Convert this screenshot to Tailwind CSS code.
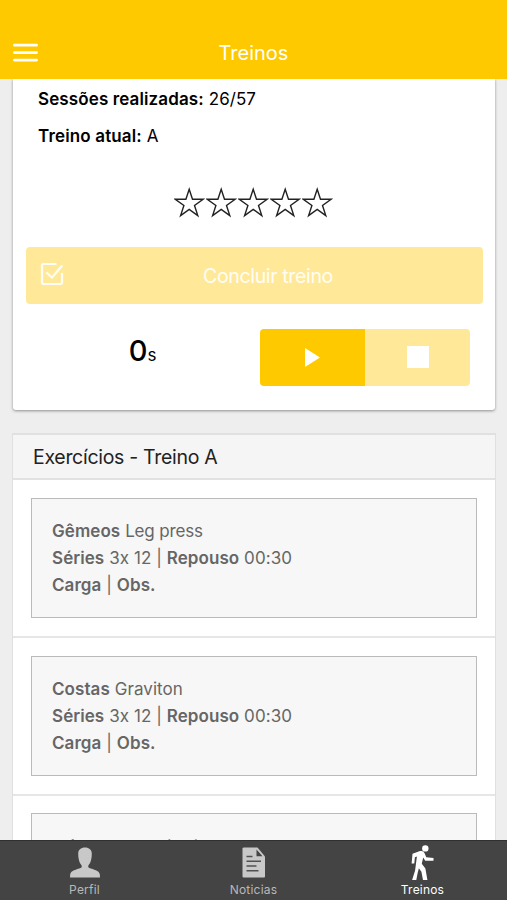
<!DOCTYPE html>
<html lang="pt">
<head>
<meta charset="utf-8">
<title>Treinos</title>
<script src="https://cdn.jsdelivr.net/npm/@tailwindcss/browser@4"></script>
</head>
<body class="bg-[#eeeeee]">
<div class="flex h-[900px] w-[507px] flex-col overflow-hidden bg-[#eeeeee] font-['Inter','Liberation_Sans',sans-serif] text-black">
  <header class="grid h-[79px] shrink-0 grid-cols-[1fr_auto_1fr] items-center bg-[#ffc900] px-[13px] pt-[26px] text-white">
    <svg class="h-5 w-[25px]" viewBox="0 0 25 20" stroke="currentColor" stroke-width="2.7" stroke-linecap="round"><path d="M1.4 2.2h22.2M1.4 9.6h22.2M1.4 17.1h22.2"/></svg>
    <h1 class="text-[20px] leading-6">Treinos</h1>
  </header>

  <main class="min-h-0 flex-1 overflow-hidden px-[13px]">
    <section class="h-[331px] w-[482px] rounded-b-[3px] bg-white px-[13px] shadow-[0_1px_3px_rgba(0,0,0,0.4)]">
      <div class="px-3 pt-[7px] text-[17px] leading-[26px] tracking-[0.07px]">
        <p><b class="font-semibold tracking-[0.12px]">Sessões realizadas:</b> 26/57</p>
        <p class="mt-[11px]"><b class="font-semibold tracking-[0.15px]">Treino atual:</b> A</p>
      </div>
      <div class="mt-[37px] -ml-px flex h-8 justify-center gap-[1.6px] text-[#222]">
        <svg class="h-8 w-[30.5px]" viewBox="0 0 30.5 32" fill="none" stroke="currentColor" stroke-width="1.4"><path d="M15.2 3.2l3.3 10.1h10.6l-8.6 6.2 3.3 10.1-8.6-6.2-8.6 6.2 3.3-10.1-8.6-6.2h10.6z"/></svg>
        <svg class="h-8 w-[30.5px]" viewBox="0 0 30.5 32" fill="none" stroke="currentColor" stroke-width="1.4"><path d="M15.2 3.2l3.3 10.1h10.6l-8.6 6.2 3.3 10.1-8.6-6.2-8.6 6.2 3.3-10.1-8.6-6.2h10.6z"/></svg>
        <svg class="h-8 w-[30.5px]" viewBox="0 0 30.5 32" fill="none" stroke="currentColor" stroke-width="1.4"><path d="M15.2 3.2l3.3 10.1h10.6l-8.6 6.2 3.3 10.1-8.6-6.2-8.6 6.2 3.3-10.1-8.6-6.2h10.6z"/></svg>
        <svg class="h-8 w-[30.5px]" viewBox="0 0 30.5 32" fill="none" stroke="currentColor" stroke-width="1.4"><path d="M15.2 3.2l3.3 10.1h10.6l-8.6 6.2 3.3 10.1-8.6-6.2-8.6 6.2 3.3-10.1-8.6-6.2h10.6z"/></svg>
        <svg class="h-8 w-[30.5px]" viewBox="0 0 30.5 32" fill="none" stroke="currentColor" stroke-width="1.4"><path d="M15.2 3.2l3.3 10.1h10.6l-8.6 6.2 3.3 10.1-8.6-6.2-8.6 6.2 3.3-10.1-8.6-6.2h10.6z"/></svg>
      </div>
      <button class="mt-[29px] grid h-[57px] w-[457px] grid-cols-[40px_1fr_13px] items-center rounded-[4px] bg-[#ffe999] px-[14px] text-white/90">
        <svg class="mb-[3px] h-6 w-6" viewBox="0 0 24 24" fill="none" stroke="currentColor" stroke-width="2.2"><path d="M16.5 2H3.3Q2 2 2 3.300V20.700Q2 22 3.300 22H20.700Q22 22 22 20.700V11M6.300 10.500L12 15.500L22.300 3.500"/></svg>
        <span class="pt-0.5 text-center text-[19.500px] tracking-[-0.35px]">Concluir treino</span>
      </button>
      <div class="mt-[25px] flex h-[57px] justify-between pr-3">
        <p class="w-[233px] pt-[5px] text-center"><span class="text-[29px] leading-[34px] font-medium">0</span><span class="text-[17px]">s</span></p>
        <div class="flex w-[210px] overflow-hidden rounded-[4px]">
          <button class="flex flex-1 items-center justify-center bg-[#ffc900]"><svg class="mb-px h-[19px] w-[15px]" viewBox="0 0 15 19" fill="#fff"><path d="M0 0l15 9.500L0 19z"/></svg></button>
          <button class="flex flex-1 items-center justify-center bg-[#ffe999]"><span class="mb-0.5 h-[22px] w-[22px] bg-white"></span></button>
        </div>
      </div>
    </section>

    <section class="-ml-px mt-[23px] w-[484px] border-x border-t-2 border-[#e0e0e0] bg-white">
      <h2 class="h-[45px] border-b-2 border-[#e2e2e2] bg-[#f5f5f5] px-5 text-[19.500px] leading-[45px] tracking-[-0.3px] text-[#222]">Exercícios - Treino A</h2>
      <article class="h-[158px] border-b-2 border-[#e6e6e6] px-[18px] pt-[18px]">
        <div class="h-[120px] w-[446px] border border-[#bababa] bg-[#f7f7f7] px-5 pt-[19px] text-[17px] leading-[27px] tracking-[0.07px] text-[#666]">
          <p><b class="font-semibold">Gêmeos</b> <span class="tracking-[-0.15px]">Leg press</span></p>
          <p><b class="font-semibold">Séries</b> 3x 12 | <b class="font-semibold">Repouso</b> 00:30</p>
          <p><b class="font-semibold">Carga</b> | <b class="font-semibold">Obs.</b></p>
        </div>
      </article>
      <article class="h-[158px] border-b-2 border-[#e6e6e6] px-[18px] pt-[18px]">
        <div class="h-[120px] w-[446px] border border-[#bababa] bg-[#f7f7f7] px-5 pt-[19px] text-[17px] leading-[27px] tracking-[0.07px] text-[#666]">
          <p><b class="font-semibold">Costas</b> Graviton</p>
          <p><b class="font-semibold">Séries</b> 3x 12 | <b class="font-semibold">Repouso</b> 00:30</p>
          <p><b class="font-semibold">Carga</b> | <b class="font-semibold">Obs.</b></p>
        </div>
      </article>
      <article class="h-[158px] px-[18px] pt-[17px]">
        <div class="h-[120px] w-[446px] border border-[#bababa] bg-[#f7f7f7] px-5 pt-5 text-[17px] leading-[27px] tracking-[0.07px] text-[#222]">
          <p><b class="font-semibold">Tríceps</b> em máquina</p>
        </div>
      </article>
    </section>
  </main>

  <nav class="grid h-[60px] shrink-0 grid-cols-3 border-t border-[#303030] bg-[#444444] text-[12px] leading-4 tracking-[0.2px] text-[#b8b8b8]">
    <a class="flex flex-col items-center pt-1">
      <svg class="h-[37px] w-[34px]" viewBox="0 0 34 37" fill="#c8c8c8"><path d="M17 2.500c-4.200 0-6.800 2.300-6.800 6.200 0 3.800.7 8.600 3.100 11.300.8 1 .6 2.500-.6 3.100C8.500 24.700 3 25.400 2.200 29.300L2 32.500h30l-.2-3.200c-.8-3.900-6.300-4.600-10.500-6.200-1.200-.6-1.400-2.100-.6-3.100 2.400-2.700 3.100-7.500 3.100-11.300 0-3.900-2.600-6.200-6.800-6.200z"/></svg>
      <span>Perfil</span>
    </a>
    <a class="flex flex-col items-center pt-1">
      <svg class="h-[37px] w-[34px]" viewBox="0 0 34 37"><path d="M7 2.500h13.500l7.500 9v20q0 1-1 1H6.500q-1 0-1-1v-28q0-1 1.500-1z" fill="#c8c8c8"/><path d="M19.500 4.500v6.800h6z" fill="#444"/><path d="M9.500 11.500h6M9.500 16.300h14.500M9.500 21h10M9.500 25.800h12" stroke="#505050" stroke-width="1.500"/></svg>
      <span>Noticias</span>
    </a>
    <a class="flex flex-col items-center pt-1 text-white">
      <svg class="h-[37px] w-[34px]" viewBox="0 0 34 37" fill="#fff"><circle cx="19.300" cy="3.400" r="3.200"/><path d="M6.500 8.700L14 6.100q3.500-.7 4.600 2.200l1.700 4 7.200.8v2.700h-8.300l-2-3.200-1.400 6.200 3.600 4.700 2 11.500h-4.400l-1.600-8.300-2.500-3.500-1.200 4.500L10.300 35H6.100l3-9.500 1.800-14-2 .8-.6 6.100H5.600z"/></svg>
      <span>Treinos</span>
    </a>
  </nav>
</div>
</body>
</html>
